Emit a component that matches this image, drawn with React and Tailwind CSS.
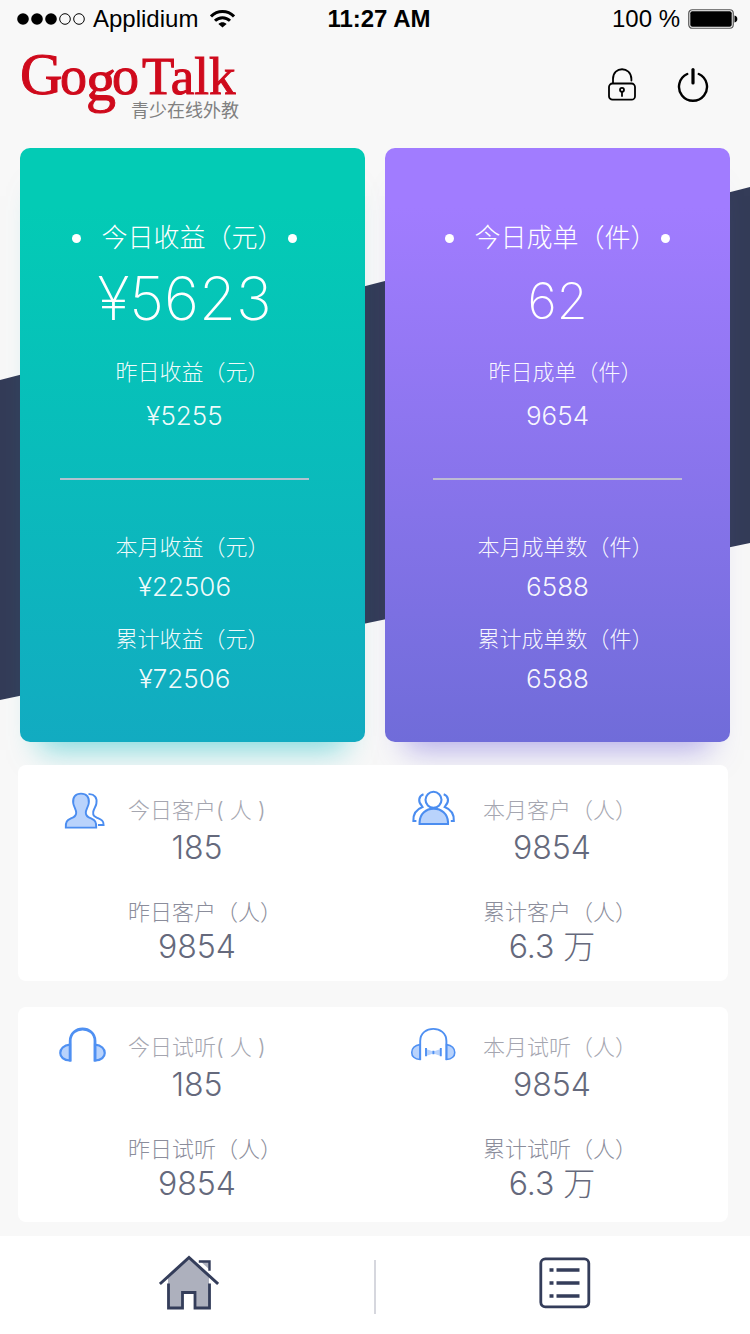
const TEXT = "font-['Inter','Noto_Sans_CJK_SC',sans-serif]";

function StatusBar() {
  return (
    <div className="grid grid-cols-3 items-center h-[38px] pl-4 pr-3 text-2xl leading-9 text-black font-['Liberation_Sans',sans-serif]">
      <div className="flex items-center gap-2">
        <svg width="69" height="12" viewBox="0 0 69 12" aria-hidden="true">
          <circle cx="7" cy="6" r="5.8" />
          <circle cx="21" cy="6" r="5.8" />
          <circle cx="35" cy="6" r="5.8" />
          <circle cx="49" cy="6" r="5.3" fill="none" stroke="#000" />
          <circle cx="63" cy="6" r="5.3" fill="none" stroke="#000" />
        </svg>
        <span>Applidium</span>
        <svg className="ml-1 shrink-0" width="25" height="18" viewBox="0 0 25 18" fill="none" stroke="#000" strokeWidth="3" aria-hidden="true">
          <path d="M1 6.4 C7.5 0 17.5 0 24 6.4" />
          <path d="M5 10.8 C9.3 6.6 15.7 6.6 20 10.8" />
          <path d="M8.4 14 C10.8 11.8 14.2 11.8 16.6 14 L12.5 17.6 Z" fill="#000" stroke="none" />
        </svg>
      </div>
      <div className="text-center font-bold whitespace-nowrap pl-1">11:27 AM</div>
      <div className="flex items-center justify-end gap-2">
        <span>100 %</span>
        <svg width="50" height="20" viewBox="0 0 50 20" aria-hidden="true">
          <rect x="0.75" y="0.75" width="44.5" height="18.5" rx="3.5" fill="none" stroke="#555" strokeWidth="1.2" />
          <rect x="2.3" y="2.3" width="41.4" height="15.4" rx="2" />
          <path d="M46.5 6.5 C50.3 7.2 50.3 12.8 46.5 13.5 Z" />
        </svg>
      </div>
    </div>
  );
}

function Logo() {
  return (
    <svg className="overflow-visible" width="222" height="74" viewBox="0 0 222 74" role="img" aria-label="Gogo Talk 青少在线外教">
      <g fill="#cf0a1c" stroke="#cf0a1c" strokeWidth="1" className="font-['Liberation_Serif',serif]">
        <text x="0" y="46" fontSize="59">G</text>
        <text x="40" y="46" fontSize="54">o</text>
        <text x="66" y="52" fontSize="60">g</text>
        <text x="92" y="46" fontSize="54">o</text>
        <text x="122" y="46" fontSize="53">Talk</text>
      </g>
      <text x="111" y="69" fontSize="18" fill="#808080" className="font-['Noto_Sans_CJK_SC',sans-serif]">青少在线外教</text>
    </svg>
  );
}

function Header() {
  return (
    <header className="flex items-center justify-between h-[110px] pl-5 pr-[41px] pb-4">
      <Logo />
      <div className="flex items-center gap-10">
        <button type="button" aria-label="锁定">
          <svg width="30" height="36" viewBox="0 0 30 36" fill="none" stroke="#000" strokeWidth="1.8" strokeLinecap="round" aria-hidden="true">
            <path d="M6 16 V12 C6 -1 24 -1 24.4 12 V13.5" />
            <rect x="2" y="16.5" width="26" height="16.2" rx="3.5" />
            <circle cx="15" cy="22.8" r="2" />
            <path d="M15 25 V29" />
          </svg>
        </button>
        <button type="button" aria-label="退出">
          <svg width="32" height="36" viewBox="0 0 32 36" fill="none" stroke="#000" strokeWidth="2.4" strokeLinecap="round" aria-hidden="true">
            <path d="M10.2 7 A14 14 0 1 0 21.8 7" />
            <path d="M16 2.5 V16" strokeWidth="3.2" />
          </svg>
        </button>
      </div>
    </header>
  );
}

function Metric({ label, value, className }) {
  return (
    <div className={`flex flex-col items-center font-light ${className}`}>
      <dt className="pl-4 text-[22px] leading-8 whitespace-nowrap">{label}</dt>
      <dd className="text-[26px] leading-8">{value}</dd>
    </div>
  );
}

function SummaryCard({ title, value, valueClass, metrics, className }) {
  return (
    <section className={`flex flex-col items-center rounded-[10px] pt-[70px] pb-[47px] text-white ${TEXT} ${className}`}>
      <div className="flex items-center h-10">
        <span className="size-[9px] rounded-full bg-white" />
        <h2 className="ml-5 mr-1 text-[26px] leading-10 font-light whitespace-nowrap">{title}</h2>
        <span className="size-[9px] rounded-full bg-white" />
      </div>
      <p className={`h-20 ${valueClass}`}>{value}</p>
      <dl className="flex flex-col items-center w-full text-white/95">
        <Metric {...metrics[0]} className="gap-3 mt-[18px]" />
        <div className="w-[249px] h-[2px] mt-[46px] mb-[51px] bg-[#c3c3d2]/90" />
        <Metric {...metrics[1]} className="gap-2" />
        <Metric {...metrics[2]} className="gap-2 mt-5" />
      </dl>
    </section>
  );
}

function PersonIcon() {
  return (
    <svg className="overflow-visible" width="48" height="40" viewBox="0 0 48 40" strokeWidth="1.9" stroke="#4b8df0" fill="none" aria-hidden="true">
      <path d="M30.5 4.2 C36.5 3.6 39.5 8 38.4 13.5 C38 16.5 35.8 18.5 35.2 22 C34.8 26 36.5 26.6 40 28.2 C43.5 29.8 45.8 31 45.6 35 L40 35" />
      <path fill="#b9d3fc" d="M23 3.6 C28.5 3.6 31.5 7.2 30.8 13 C30.4 17 27.6 19.5 27.8 23 C28 26.5 30 27 33.5 28.6 C37 30.2 38.4 31.5 38.2 37.6 L7.8 37.6 C7.6 31.5 9 30.2 12.5 28.6 C16 27 18 26.5 18.2 23 C18.4 19.5 15.6 17 15.2 13 C14.5 7.2 17.5 3.6 23 3.6 Z" />
    </svg>
  );
}

function GroupIcon() {
  return (
    <svg className="overflow-visible" width="48" height="40" viewBox="0 0 48 40" strokeWidth="2.1" stroke="#4b8df0" fill="none" aria-hidden="true">
      <circle cx="20.5" cy="9.8" r="8" />
      <path fill="#b9d3fc" d="M6.6 34 V32 C7 24 13 18.6 20.7 18.6 C28.4 18.6 34.6 24 35 32 V34 Z" />
      <path d="M10.5 4.3 C5.5 6 4.8 12 8.8 15.8 L9.5 17 C3 19.5 0 24 .4 31 L3.4 31" />
      <path d="M30.7 4.3 C35.7 6 36.4 12 32.4 15.8 L31.7 17 C38.2 19.5 41.2 24 40.8 31 L37.8 31" />
    </svg>
  );
}

function HeadphoneIcon() {
  return (
    <svg className="overflow-visible" width="48" height="40" viewBox="0 3 48 40" strokeWidth="2.8" stroke="#4f90f2" aria-hidden="true">
      <path fill="#b9d3fc" strokeWidth="2.2" d="M12 20.6 C-1 21.5 -1 36.5 12 36.5 Z" />
      <path fill="#b9d3fc" strokeWidth="2.2" d="M37 20.6 C50 21.5 50 36.5 37 36.5 Z" />
      <path fill="none" d="M12.2 37.6 V17 C12.2 1 37 1 37 17 V37.6" />
    </svg>
  );
}

function BowHeadphoneIcon() {
  return (
    <svg className="overflow-visible" width="48" height="40" viewBox="0 3 48 40" strokeWidth="1.9" stroke="#4f90f2" aria-hidden="true">
      <path fill="#b9d3fc" strokeWidth="1.6" d="M7 20.6 C-4 21.5 -4 35.5 7 35.5 Z" />
      <path fill="#b9d3fc" strokeWidth="1.6" d="M33.5 20.6 C44.5 21.5 44.5 35.5 33.5 35.5 Z" />
      <path fill="none" d="M7.2 36 V17 C7.2 .8 33.4 .8 33.4 17 V36" />
      <path fill="#b9d3fc" stroke="none" d="M13 25 L20.3 27.5 L27.8 25 V32 L20.3 29.5 L13 32 Z" />
      <path fill="none" d="M13 24 V32.2 M27.8 24 V32.2 M20.4 26.8 V30.2" />
    </svg>
  );
}

function StatColumn({ icon, first, second }) {
  return (
    <div className="flex items-start gap-[22px] pl-10">
      <div className="w-12 shrink-0 -mt-1">{icon}</div>
      <dl className="flex flex-col w-[154px] text-[22px] font-light whitespace-nowrap">
        <dt className="leading-8 text-[#a5a6b0]">{first[0]}</dt>
        <dd className="mt-1 pr-4 text-center text-[32px] leading-9 text-[#65697c]">{first[1]}</dd>
        <dt className="mt-[30px] leading-8 text-[#8b8d9b]">{second[0]}</dt>
        <dd className="mt-px pr-4 text-center text-[32px] leading-9 text-[#65697c]">{second[1]}</dd>
      </dl>
    </div>
  );
}

function Panel({ columns, className }) {
  return (
    <section className={`grid grid-cols-2 rounded-lg bg-white ${TEXT} ${className}`}>
      {columns.map((c) => (
        <StatColumn key={c.first[0]} {...c} />
      ))}
    </section>
  );
}

function TabBar() {
  return (
    <nav className="flex items-center h-[98px] mt-[14px] pb-1 bg-white">
      <button type="button" aria-label="首页" className="flex-1 flex justify-center pl-1">
        <svg width="60" height="56" viewBox="0 0 60 56" fill="none" stroke="#343d5a" strokeWidth="3" strokeLinecap="square" aria-hidden="true">
          <path stroke="none" fill="#adb0bd" d="M30 3 L50 22 V53 H36 V37 H24 V53 H9 V22 Z" />
          <path stroke="none" fill="#adb0bd" d="M41 6 H51 V15 Z" />
          <path d="M2 28 L30 2.5 L58 28" />
          <path d="M41 6.5 H50.5 V14.5" strokeWidth="2.4" />
          <path d="M9.5 30 V53 H23.5 V37.5 H36 V53 H50.5 V30" strokeWidth="2.8" />
        </svg>
      </button>
      <div className="w-[2px] h-[54px] mt-2 bg-[#d6d7de]" />
      <button type="button" aria-label="列表" className="flex-1 flex justify-center pl-1">
        <svg width="52" height="52" viewBox="0 0 52 52" fill="none" stroke="#343d5a" aria-hidden="true">
          <rect x="1.8" y="1.8" width="48" height="48" rx="4.5" strokeWidth="2.8" />
          <path d="M10.5 13 H14.5 M17.5 13 H40.5 M10.5 26 H14.5 M17.5 26 H40.5 M10.5 39 H14.5 M17.5 39 H40.5" strokeWidth="3.6" />
        </svg>
      </button>
    </nav>
  );
}

export default function App() {
  return (
    <div lang="zh-CN" className="relative isolate min-h-screen bg-[#f8f8f8]">
      <div className="absolute inset-x-0 top-[187px] -z-10 h-[513px] bg-[#343c58] [clip-path:polygon(0_193px,100%_0,100%_356px,0_100%)]" />
      <StatusBar />
      <Header />
      <main>
        <div className="grid grid-cols-2 gap-5 px-5">
          <SummaryCard
            title="今日收益（元）"
            value="¥5623"
            valueClass="text-[60px] leading-[80px] font-extralight"
            metrics={[
              { label: "昨日收益（元）", value: "¥5255" },
              { label: "本月收益（元）", value: "¥22506" },
              { label: "累计收益（元）", value: "¥72506" },
            ]}
            className="pr-4 bg-linear-to-b from-[#03cbb5] from-10% to-[#12abc1] shadow-[0_28px_28px_-20px_rgba(10,190,195,0.5)]"
          />
          <SummaryCard
            title="今日成单（件）"
            value="62"
            valueClass="text-[50px] leading-[86px] font-extralight"
            metrics={[
              { label: "昨日成单（件）", value: "9654" },
              { label: "本月成单数（件）", value: "6588" },
              { label: "累计成单数（件）", value: "6588" },
            ]}
            className="bg-linear-to-b from-[#a17cff] from-10% to-[#706cd9] shadow-[0_28px_28px_-20px_rgba(115,100,220,0.5)]"
          />
        </div>
        <div className="relative flex flex-col gap-[26px] mt-[23px] pl-[18px] pr-[22px]">
          <Panel
            className="pt-[29px] pb-4"
            columns={[
              { icon: <PersonIcon />, first: ["今日客户( 人 )", "185"], second: ["昨日客户（人）", "9854"] },
              { icon: <GroupIcon />, first: ["本月客户（人）", "9854"], second: ["累计客户（人）", "6.3 万"] },
            ]}
          />
          <Panel
            className="pt-6 pb-5"
            columns={[
              { icon: <HeadphoneIcon />, first: ["今日试听( 人 )", "185"], second: ["昨日试听（人）", "9854"] },
              { icon: <BowHeadphoneIcon />, first: ["本月试听（人）", "9854"], second: ["累计试听（人）", "6.3 万"] },
            ]}
          />
        </div>
      </main>
      <TabBar />
    </div>
  );
}
